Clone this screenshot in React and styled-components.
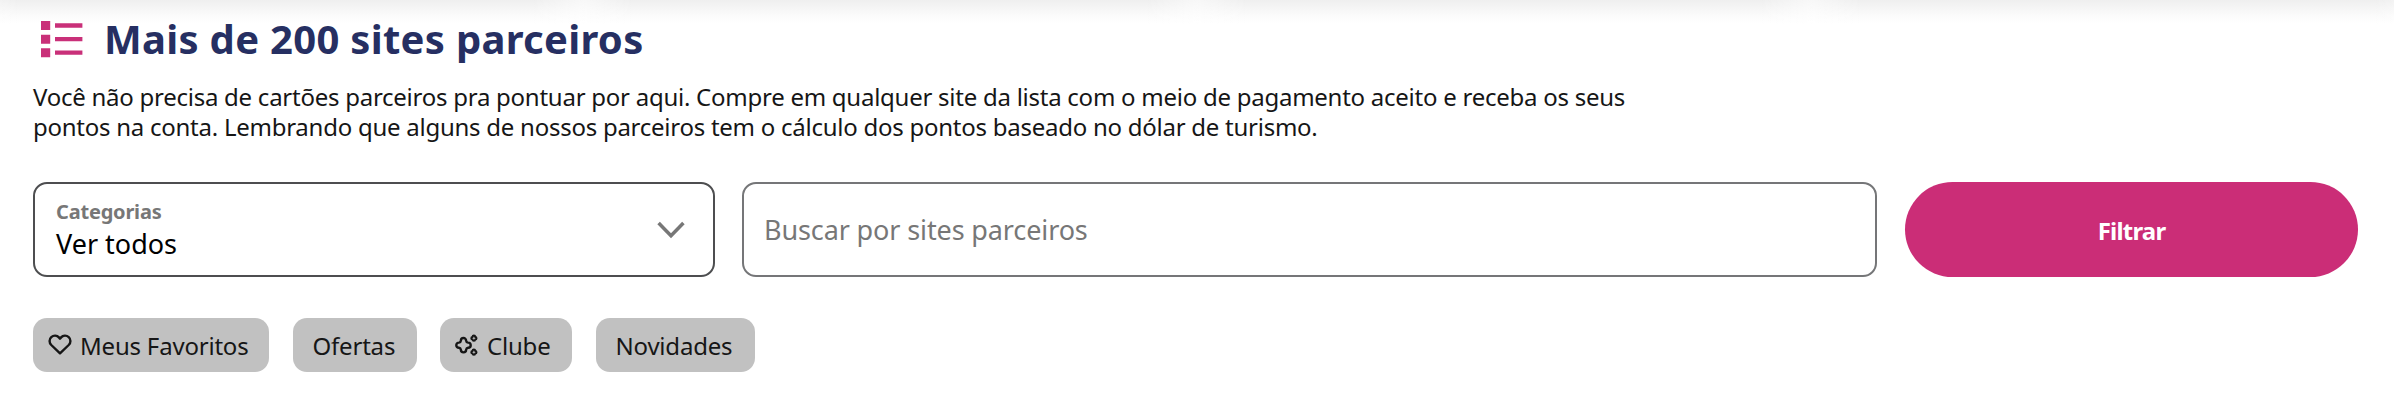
import styled, { createGlobalStyle } from "styled-components";

const categories = ["Ver todos"];

const chips = [
  { label: "Meus Favoritos", icon: "heart", width: 236 },
  { label: "Ofertas", width: 124 },
  { label: "Clube", icon: "sparkle", width: 132 },
  { label: "Novidades", width: 159 },
];

const ListIcon = () => (
  <svg width="42" height="37" viewBox="0 0 42 37" fill="#c93079">
    <path d="M0 0h9.2v9H0zM0 13.7h9.2v9H0zM0 27.2h9.2v9H0z" />
    <path d="M14 2.3h27.4v4.4H14zM14 15.9h27.4v4.4H14zM14 29.4h27.4v4.4H14z" />
  </svg>
);

const ChevronIcon = () => (
  <svg width="28" height="18" viewBox="0 0 28 18" fill="none">
    <path d="M1.6 2 14 14.8 26.4 2" stroke="#777" strokeWidth="3.5" />
  </svg>
);

const HeartIcon = () => (
  <svg width="24" height="22" viewBox="0 0 24 22" fill="none">
    <path
      d="M12 19.3 3.3 11C1 8.6 1 5.2 3.3 3.1c2.3-2.1 5.7-1.8 7.6.3L12 4.7l1.1-1.3c1.9-2.1 5.3-2.4 7.6-.3 2.3 2.1 2.3 5.5 0 7.9z"
      stroke="#161616"
      strokeWidth="2.4"
      strokeLinejoin="round"
    />
  </svg>
);

const SparkleIcon = () => (
  <svg
    width="24"
    height="22"
    viewBox="0 0 24 22"
    fill="none"
    stroke="#161616"
    strokeLinejoin="round"
  >
    <path
      d="M5.9 6.6a2.6 2.6 0 0 1 5.2 0q.2 1.8 2 2a2.6 2.6 0 0 1 0 5.2q-1.800.2-2 2a2.600 2.600 0 0 1-5.200 0q-.2-1.800-2-2a2.600 2.600 0 0 1 0-5.200q1.800-.2 2-2z"
      strokeWidth="2.4"
    />
    <path
      d="M17.600 2.900a1.300 1.300 0 0 1 2.600 0a1.300 1.300 0 0 1 0 2.600a1.300 1.300 0 0 1-2.600 0a1.300 1.300 0 0 1 0-2.600zM17.600 16.900a1.300 1.300 0 0 1 2.600 0a1.300 1.300 0 0 1 0 2.600a1.300 1.300 0 0 1-2.600 0a1.300 1.300 0 0 1 0-2.600z"
      strokeWidth="2"
    />
  </svg>
);

const icons = { heart: <HeartIcon />, sparkle: <SparkleIcon /> };

const App = () => (
  <>
    <GlobalStyle />
    <Section>
      <Header>
        <ListIcon />
        <Title>Mais de 200 sites parceiros</Title>
      </Header>
      <Description>
        Você não precisa de cartões parceiros pra pontuar por aqui. Compre em
        qualquer site da lista com o meio de pagamento aceito e receba os seus
        <br />
        pontos na conta. Lembrando que alguns de nossos parceiros tem o cálculo
        dos pontos baseado no dólar de turismo.
      </Description>
      <Filters>
        <Select type="button">
          <span>
            <SelectLabel>Categorias</SelectLabel>
            <SelectValue>{categories[0]}</SelectValue>
          </span>
          <ChevronIcon />
        </Select>
        <Search placeholder="Buscar por sites parceiros" />
        <Submit type="button">Filtrar</Submit>
      </Filters>
      <Chips>
        {chips.map(({ label, icon, width }) => (
          <Chip key={label} $width={width} $hasIcon={Boolean(icon)}>
            {icon && icons[icon]}
            {label}
          </Chip>
        ))}
      </Chips>
    </Section>
  </>
);

const GlobalStyle = createGlobalStyle`
  * {
    box-sizing: border-box;
  }

  body {
    margin: 0;
    background-color: white;
    font-family: "Noto Sans", sans-serif;
    color: #161616;
  }

  button,
  input {
    margin: 0;
    font-family: inherit;
  }

  svg {
    display: block;
    flex-shrink: 0;
  }
`;

const Section = styled.section`
  height: 400px;
  padding: 15px 35px 0 33px;

  background: linear-gradient(
        90deg,
        rgba(255, 255, 255, 0) 42%,
        rgba(255, 255, 255, 0.55) 50%,
        rgba(255, 255, 255, 0) 58%
      )
      276px 0 / 614px 24px repeat-x,
    linear-gradient(#efefef, #f6f6f6 9px, #fcfcfc 17px, white 23px) no-repeat
      top / 100% 24px;
`;

const Header = styled.header`
  display: flex;
  align-items: center;
  gap: 21px;

  height: 48px;
  padding-left: 8px;
`;

const Title = styled.h2`
  margin: 0;

  font-size: 40px;
  font-weight: 700;
  line-height: 48px;
  letter-spacing: 0.3px;
  white-space: nowrap;

  color: #262f62;
`;

const Description = styled.p`
  margin: 19px 0 0;

  font-size: 24px;
  line-height: 30px;
  letter-spacing: -0.255px;
  white-space: nowrap;
`;

const Filters = styled.form`
  display: grid;
  grid-template-columns: 682px 1135px 454px;
  column-gap: 27px;

  height: 95px;
  margin-top: 40px;

  button:last-child {
    margin-left: 1px;
  }
`;

const Select = styled.button`
  display: flex;
  align-items: center;
  justify-content: space-between;

  border: 2px solid #4d4e50;
  border-radius: 14px;

  text-align: left;

  background-color: white;
  padding: 1px 28px 0 21px;
`;

const SelectLabel = styled.span`
  display: block;

  font-size: 20px;
  font-weight: 700;
  line-height: 26px;
  letter-spacing: -0.2px;

  color: #777;
`;

const SelectValue = styled.span`
  display: block;

  font-size: 27px;
  line-height: 37px;

  color: black;
`;

const Search = styled.input`
  border: 2px solid #757678;
  border-radius: 14px;

  font-size: 27px;
  letter-spacing: -0.12px;

  padding: 0 20px;

  &::placeholder {
    color: #777;
    opacity: 1;
  }
`;

const Submit = styled.button`
  border: 0;
  border-radius: 48px;

  font-size: 24px;
  font-weight: 700;
  letter-spacing: -0.8px;

  background-color: #cb2d77;
  color: white;

  padding: 1px 0 0;
`;

const Chips = styled.div`
  display: flex;
  gap: 23.5px;

  margin-top: 41px;
`;

const Chip = styled.div`
  display: flex;
  align-items: center;
  gap: 8px;

  width: ${({ $width }) => $width}px;
  height: 54px;
  border-radius: 14px;

  font-size: 24px;
  letter-spacing: -0.2px;
  white-space: nowrap;

  background-color: #c1c1c1;
  padding-left: ${({ $hasIcon }) => ($hasIcon ? 15 : 20)}px;
`;

export default App;
